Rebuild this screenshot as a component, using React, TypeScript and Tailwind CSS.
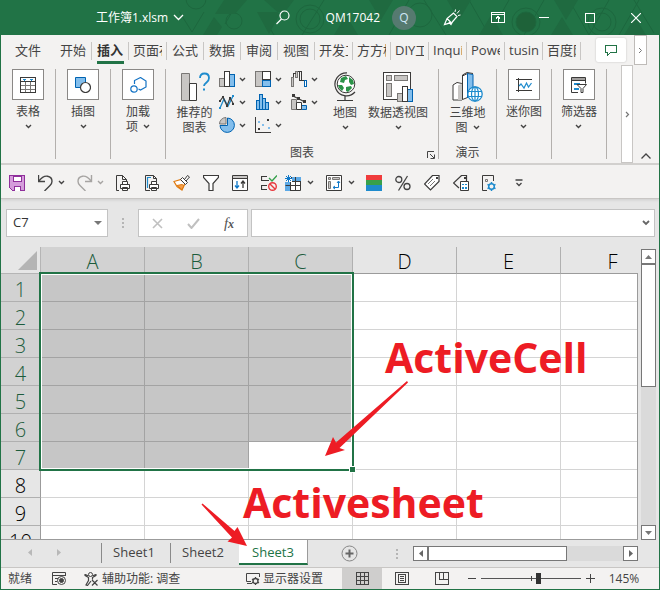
import React from "react";

type IconProps = { w?: number; h?: number; children: React.ReactNode; className?: string; crisp?: boolean };

function Icon({ w = 16, h = 16, children, className = "", crisp = false }: IconProps) {
  return (
    <svg
      width={w}
      height={h}
      viewBox={`0 0 ${w} ${h}`}
      fill="none"
      stroke="#444"
      strokeWidth="1"
      shapeRendering={crisp ? "crispEdges" : "auto"}
      aria-hidden="true"
      className={`shrink-0 ${className}`}
    >
      {children}
    </svg>
  );
}

function Chevron({ color = "#444" }: { color?: string }) {
  return (
    <Icon w={7} h={5}>
      <path d="M1 1l2.5 2.5L6 1" stroke={color} strokeWidth="1.4" />
    </Icon>
  );
}

/* ---------- title bar ---------- */

function TitlePattern() {
  return (
    <svg className="absolute inset-y-0 right-0 h-full w-[480px]" viewBox="0 0 480 35" fill="none" stroke="#1d673e" aria-hidden="true">
      <path d="M-7 0l20 32M13 32l12-20M60 0l-14 24M95 35L82 14M145 0l-22 35M210 35l20-35M245 0l22 35M290 0l20 35 20-35M345 35l20-35M390 0l20 35 20-35M440 35l20-35M455 0l20 33" />
      <circle cx="17" cy="-1" r="10" />
      <circle cx="55" cy="21" r="8" />
      <circle cx="131" cy="19" r="10" />
      <circle cx="131" cy="19" r="14" />
      <circle cx="241" cy="15" r="12" />
      <circle cx="347" cy="22" r="10" fill="#1e6239" />
      <circle cx="347" cy="22" r="14" />
      <circle cx="423" cy="22" r="9" />
      <circle cx="423" cy="22" r="14" />
      <path d="M24 35l11-18 8 10-5 8zM36 14l9-14h23l-12 14zM78 12l12 22 12-22zM85 0h30l-12 16zM155 35l12-20 12 20zM190 0h24l-12 20zM300 35l12-20 12 20zM268 0h24l-12 20zM375 0h24l-12 20zM372 35l11-18 11 18zM445 35l11-18 11 18z" fill="#1f6a40" stroke="none" />
    </svg>
  );
}

function TitleBar() {
  const control = "flex h-full w-[46px] items-center justify-center";
  return (
    <header className="relative flex h-[35px] shrink-0 items-center overflow-hidden bg-[#217346] text-[12px] leading-4 text-white">
      <TitlePattern />
      <button className="relative ml-[95px] flex items-center gap-[5px]">
        <span>工作簿1.xlsm</span>
        <Icon w={11} h={7}>
          <path d="M1 1l4.500 4.500L10 1" stroke="#fff" strokeWidth="1.300" />
        </Icon>
      </button>
      <div className="relative ml-auto flex h-full items-center">
        <button aria-label="搜索" className="mr-9">
          <Icon w={14} h={15}>
            <circle cx="8.500" cy="5.500" r="4.500" stroke="#fff" strokeWidth="1.200" />
            <path d="M5.500 9L0.500 14" stroke="#fff" strokeWidth="1.300" />
          </Icon>
        </button>
        <span className="mr-3">QM17042</span>
        <span className="mr-[13px] flex size-6 items-center justify-center rounded-full bg-[#567a70] text-[#cfe6f5]">Q</span>
        <button aria-label="笔" className={control}>
          <Icon w={18} h={17}>
            <path d="M1.500 15.500l2.500-6L10.500 4l3.500 3.500-5 6zM4 9.500l4 4M1.500 15.500l5-1.500 1.500 1.500 2-3.500" stroke="#fff" strokeWidth="1.200" />
            <path d="M12 3l0.500-2.500M14 4.500l2.500-3M15 6.500l2.500-0.500" stroke="#fff" />
          </Icon>
        </button>
        <button aria-label="功能区显示选项" className={control}>
          <Icon w={14} h={11} crisp>
            <path d="M0.500 0.500h13v10h-13zM0 2.500h14M7 10V5M5 6.500l2-2 2 2" stroke="#fff" />
          </Icon>
        </button>
        <button aria-label="最小化" className={control}>
          <span className="h-px w-[10px] bg-white" />
        </button>
        <button aria-label="最大化" className={control}>
          <span className="size-[10px] border border-white" />
        </button>
        <button aria-label="关闭" className={control}>
          <Icon w={10} h={10}>
            <path d="M0 0l10 10M10 0L0 10" stroke="#fff" strokeWidth="1.200" />
          </Icon>
        </button>
      </div>
    </header>
  );
}

/* ---------- ribbon tabs ---------- */

const tabs = ["开始", "插入", "页面布", "公式", "数据", "审阅", "视图", "开发工", "方方格", "DIY工", "Inquire", "Power", "tusin", "百度网"];

function RibbonTabs() {
  return (
    <nav className="flex h-[31px] shrink-0 items-center text-[13px] leading-[18px] text-[#444]">
      <button className="w-[54px] pb-[2px] text-center">文件</button>
      {tabs.map((t) => {
        const active = t === "插入";
        const shape = t.length === 2 ? "w-[37px] pl-[5px] pr-1" : t === "tusin" ? "w-[38px] pl-1" : "w-[38px] px-1";
        return (
          <button
            key={t}
            className={`relative h-[18px] border-r border-[#c8c6c4] text-left ${shape} ${active ? "font-bold text-[#333]" : ""}`}
          >
            <span className="-mt-[2px] block overflow-hidden whitespace-nowrap">{t}</span>
            {active && <span className="absolute top-[19px] left-[5px] h-[3px] w-[27px] bg-[#217346]" />}
          </button>
        );
      })}
      <div className="ml-auto flex h-full items-start">
        <button aria-label="批注" className="mt-[3px] mr-2 flex h-6 w-[30px] items-center justify-center rounded-[2px] bg-white shadow-[0_0_2px_#bbb]">
          <Icon w={12} h={11} crisp>
            <path d="M0.500 0.500h11v7h-6l-3 3v-3h-2z" stroke="#217346" />
          </Icon>
        </button>
        <button aria-label="更多选项卡" className="mr-3 flex h-[30px] w-[13px] items-center justify-center border border-[#bebbb8] bg-white">
          <Icon w={5} h={7}>
            <path d="M1 1l2.500 2.500L1 6" stroke="#777" />
          </Icon>
        </button>
      </div>
    </nav>
  );
}

/* ---------- ribbon body ---------- */

function Group({ width, label, children }: { width: string; label?: string; children: React.ReactNode }) {
  return (
    <section className={`relative mt-[3px] flex h-[90px] flex-col items-center border-r border-[#b3b0ad] ${width}`}>
      {children}
      {label && <h2 className="mt-auto leading-[12px]">{label}</h2>}
    </section>
  );
}

function BoxedButton({ lines, chevronInline, children }: { lines: string[]; chevronInline?: boolean; children: React.ReactNode }) {
  return (
    <button className="flex flex-col items-center leading-[14px]">
      <span className="mb-1 flex h-[31px] w-8 items-center justify-center border border-[#8a8886] bg-white">{children}</span>
      {lines.map((l, i) => (
        <span key={l} className="flex h-[15px] items-center gap-[5px]">
          {l}
          {chevronInline && i === lines.length - 1 && <Chevron />}
        </span>
      ))}
      {!chevronInline && (
        <span className="flex h-[14px] items-center">
          <Chevron />
        </span>
      )}
    </button>
  );
}

function PlainButton({ width, lines, chevron, children }: { width: string; lines: string[]; chevron?: "below" | "inline"; children: React.ReactNode }) {
  return (
    <button className={`flex flex-col items-center pt-[3px] leading-[15px] ${width}`}>
      <span className="mb-[3px] flex h-[30px] items-center">{children}</span>
      {lines.map((l, i) => (
        <span key={l} className="flex h-[15px] items-center gap-[5px] whitespace-nowrap">
          {l}
          {chevron === "inline" && i === lines.length - 1 && <Chevron />}
        </span>
      ))}
      {chevron === "below" && (
        <span className="flex h-[14px] items-center">
          <Chevron />
        </span>
      )}
    </button>
  );
}

const miniCharts: { name: string; art: React.ReactNode }[] = [
  {
    name: "柱形图",
    art: (
      <Icon crisp>
        <path d="M0.500 7.500h5v8h-5z" fill="#c8c6c4" stroke="#797775" />
        <path d="M10.500 3.500h5v12h-5z" fill="#83beec" stroke="#0063b1" />
        <path d="M5.500 0.500h5v15h-5z" fill="#fff" stroke="#3b3a39" />
      </Icon>
    ),
  },
  {
    name: "层次结构图",
    art: (
      <Icon crisp>
        <path d="M0.500 0.500h7v15h-7z" fill="#c8c6c4" stroke="#797775" />
        <path d="M7.500 0.500h8v8h-8z" fill="#fff" stroke="#3b3a39" />
        <path d="M7.500 9.500h8v6h-8z" fill="#83beec" stroke="#0063b1" />
      </Icon>
    ),
  },
  {
    name: "瀑布图",
    art: (
      <Icon crisp>
        <path d="M0.500 6.500h2v9h-2zM4.500 0.500h2v6h-2z" fill="#c8c6c4" stroke="#797775" />
        <path d="M2.500 6V2.500h2M6.500 0.500h4v9h-2v-9M10.500 9.500h3" stroke="#3b3a39" />
        <path d="M13.500 9.500h2v6h-2z" fill="#fff" stroke="#0063b1" />
      </Icon>
    ),
  },
  {
    name: "折线图",
    art: (
      <Icon>
        <path d="M1 14l4-9 4 7 5-10" stroke="#1e8bcd" strokeWidth="1.300" />
        <path d="M1 7l3-4 4 9 3-8 3 5" stroke="#3b3a39" strokeWidth="1.200" />
        <path d="M0 6h2v2H0zM3 2h2v2H3zM7 11h2v2H7zM10 3h2v2h-2zM13 9h2v2h-2z" fill="#3b3a39" stroke="none" />
        <path d="M0 13h2v2H0zM13 1h2v2h-2z" fill="#1e8bcd" stroke="none" />
      </Icon>
    ),
  },
  {
    name: "统计图",
    art: (
      <Icon crisp>
        <path d="M1.500 6.500h3v9h-3zM4.500 0.500h3v15h-3zM7.500 4.500h3v11h-3zM10.500 8.500h3v7h-3z" fill="#83beec" stroke="#0063b1" />
      </Icon>
    ),
  },
  {
    name: "组合图",
    art: (
      <Icon>
        <path d="M0.500 5.500h5v10h-5z" fill="#c8c6c4" stroke="#797775" />
        <path d="M10.500 11.500h5v4h-5z" fill="#83beec" stroke="#0063b1" />
        <path d="M5.500 8.500h5v7h-5z" fill="#fff" stroke="#3b3a39" />
        <path d="M2 2l6 3 6 3" stroke="#3b3a39" strokeWidth="1.200" />
        <path d="M1 0h3v3H1zM6 3h3v3H6zM12 6h3v3h-3z" fill="#3b3a39" stroke="none" />
      </Icon>
    ),
  },
  {
    name: "饼图",
    art: (
      <Icon>
        <path d="M8.500 1a7.200 7.200 0 1 1-7.500 7.500h7.500z" fill="#83beec" stroke="#0063b1" />
        <path d="M7 0.500v6.500H0.500A6.500 6.500 0 0 1 7 0.500z" fill="#c8c6c4" stroke="#797775" />
      </Icon>
    ),
  },
  {
    name: "散点图",
    art: (
      <Icon crisp>
        <path d="M0.500 0v15.500H16" stroke="#3b3a39" />
        <path d="M3 4h2v2H3zM7 7h2v2H7zM13 10h2v2h-2z" fill="#83beec" stroke="none" />
        <path d="M12 2h2v2h-2zM3 11h2v2H3z" fill="#3b3a39" stroke="none" />
      </Icon>
    ),
  },
];

function RibbonBody() {
  return (
    <div className="flex h-[97px] shrink-0 text-[12px] text-[#444]">
      <Group width="w-[55px]">
        <BoxedButton lines={["表格"]}>
          <Icon crisp>
            <path d="M0.500 0.500h15v15h-15z" fill="#fff" stroke="#3b3a39" />
            <path d="M1 8.500h14M1 12.500h14M5.500 5v10M10.500 5v10" stroke="#797775" />
            <path d="M0 4.500h16" stroke="#3b3a39" />
            <path d="M2 2h4L4 4zM9 2h4l-2 2z" fill="#1e8bcd" stroke="none" />
          </Icon>
        </BoxedButton>
      </Group>
      <Group width="w-[55px]">
        <BoxedButton lines={["插图"]}>
          <Icon>
            <path d="M0.500 0.500h10v10h-10z" fill="#83beec" stroke="#0063b1" />
            <circle cx="10.500" cy="10.500" r="5" fill="#fff" stroke="#3b3a39" strokeWidth="1.200" />
          </Icon>
        </BoxedButton>
      </Group>
      <Group width="w-[55px]">
        <BoxedButton lines={["加载", "项"]} chevronInline>
          <Icon w={17}>
            <path d="M4.500 7L4.500 3.500 10.500 0.500l5.500 3.500v6l-5.500 3-2-1" stroke="#1473c4" strokeWidth="1.200" />
            <circle cx="4" cy="12" r="3.200" stroke="#1473c4" strokeWidth="1.200" />
          </Icon>
        </BoxedButton>
      </Group>

      <Group width="w-[273px]" label="图表">
        <div className="flex w-full items-start pl-[9px]">
          <PlainButton width="w-[39px] mr-[5px]" lines={["推荐的", "图表"]}>
            <Icon w={30} h={30}>
              <path d="M1.500 1.500h8v27h-8z" fill="#c8c6c4" stroke="#797775" />
              <path d="M9.500 11.500h7v17h-7z" fill="#fff" stroke="#3b3a39" />
              <path d="M20 6q0-4.500 4.500-4.500T29 6q0 2.500-2.500 4.500T24 14" stroke="#1e8bcd" strokeWidth="1.800" />
              <path d="M23 16.500h2v2h-2z" fill="#1e8bcd" stroke="none" />
            </Icon>
          </PlainButton>
          <div className="mt-[2px] grid grid-cols-[36px_36px_36px] grid-rows-[16px_16px_16px] gap-y-[7px]">
            {miniCharts.map((c) => (
              <button key={c.name} aria-label={c.name} className="flex items-center gap-1">
                {c.art}
                <Chevron />
              </button>
            ))}
          </div>
          <PlainButton width="w-9" lines={["地图"]} chevron="below">
            <Icon w={24} h={30}>
              <circle cx="13" cy="12" r="8.800" fill="#fff" stroke="#3b3a39" />
              <path d="M8 6l5-2 2 3-3 1-1 3-4-1zM16 5l4 3 1 4-3 1-2-3zM5 13l4 0 2 3-2 3-3-3zM13 15l5-1 1 2-4 4-2-1z" fill="#2b9348" stroke="none" />
              <path d="M14 0.800A11.500 11.500 0 1 0 22 20M12 23.500V28M4 28.500h16" stroke="#3b3a39" strokeWidth="1.200" />
            </Icon>
          </PlainButton>
          <PlainButton width="w-[70px]" lines={["数据透视图"]} chevron="below">
            <Icon w={30} h={30} crisp>
              <path d="M0.500 0.500h27v27h-27z" fill="#fff" stroke="#3b3a39" />
              <path d="M3.500 3.500h5v5h-5zM11.500 3.500h13v5h-13zM3.500 11.500h5v13h-5z" fill="#c8c6c4" stroke="#797775" />
              <path d="M14.500 21.500h5v8h-5z" fill="#c8c6c4" stroke="#797775" />
              <path d="M24.500 17.500h5v12h-5z" fill="#83beec" stroke="#0063b1" />
              <path d="M19.500 14.500h5v15h-5z" fill="#fff" stroke="#3b3a39" />
            </Icon>
          </PlainButton>
        </div>
        <button aria-label="图表设置" className="absolute right-[3px] bottom-0">
          <Icon w={8} h={8}>
            <path d="M0.500 7V0.500H7M3 3l4 4M7.500 3.500v4h-4" stroke="#444" />
          </Icon>
        </button>
      </Group>

      <Group width="w-[58px]" label="演示">
        <PlainButton width="w-full" lines={["三维地", "图"]} chevron="inline">
          <Icon w={31} h={30}>
            <path d="M10.500 4l5-2.500v24l-5 2z" fill="#fff" stroke="#3b3a39" />
            <path d="M15.500 1.500l5.500 1V18l-5.500 8z" fill="#83beec" stroke="#0063b1" />
            <path d="M10.500 27V3l4.500-2.500 6 1" stroke="#3b3a39" />
            <path d="M1 13l4-2.500 5 1v16.500H1z" fill="#fff" stroke="#3b3a39" />
            <path d="M6 13.500l4-2v16.500H6z" fill="#c8c6c4" stroke="none" />
            <circle cx="23" cy="22" r="7.200" fill="#fff" stroke="#1e8bcd" strokeWidth="1.300" />
            <ellipse cx="23" cy="22" rx="3.500" ry="7.200" stroke="#1e8bcd" strokeWidth="1.200" />
            <path d="M16 19.500h14M16 24.500h14M23 15v14" stroke="#1e8bcd" strokeWidth="1.200" />
          </Icon>
        </PlainButton>
      </Group>
      <Group width="w-[55px]">
        <BoxedButton lines={["迷你图"]}>
          <Icon h={14}>
            <path d="M2.500 0v14M0 1.500h16M0 12.500h16" stroke="#3b3a39" shapeRendering="crispEdges" />
            <path d="M3 8l2-2 3 4 2.500-5 2 4 3-4" stroke="#1e8bcd" strokeWidth="1.200" />
          </Icon>
        </BoxedButton>
      </Group>
      <Group width="w-[55px]">
        <BoxedButton lines={["筛选器"]}>
          <Icon w={17}>
            <path d="M8 15.500H1.500v-15h14v6" stroke="#3b3a39" fill="#fff" />
            <path d="M2 1h13v3H2z" fill="#a19f9d" stroke="none" />
            <path d="M1.500 3.500h14" stroke="#3b3a39" />
            <path d="M4 6h6v2H4zM4 11h5v2H4z" fill="#1e8bcd" stroke="none" />
            <path d="M7 7.500h9.500L13 11.500v4h-2v-4z" fill="#fff" stroke="#3b3a39" />
          </Icon>
        </BoxedButton>
      </Group>
      <div className="ml-auto flex">
        <button aria-label="向右滚动" className="-mt-px flex h-[98px] w-3 items-center justify-center border border-[#c8c6c4] bg-white">
          <Icon w={5} h={7}>
            <path d="M1 1l2.500 2.500L1 6" stroke="#777" strokeWidth="1.200" />
          </Icon>
        </button>
        <button aria-label="折叠功能区" className="flex w-[26px] items-end justify-center pb-1">
          <Icon w={10} h={6}>
            <path d="M0.500 5.500L5 1l4.500 4.500" strokeWidth="1.300" />
          </Icon>
        </button>
      </div>
    </div>
  );
}

/* ---------- quick access toolbar ---------- */

function Tool({ name, children }: { name: string; children: React.ReactNode }) {
  return (
    <button aria-label={name} className="flex h-full w-[29px] items-center justify-center">
      {children}
    </button>
  );
}

function QuickAccess() {
  return (
    <div className="z-10 flex h-[34px] shrink-0 items-center border-b border-[#c8c6c4] bg-[#f3f2f1] pt-[2px] pl-px shadow-[0_1px_3px_#ccc]">
      <Tool name="保存">
        <Icon crisp>
          <path d="M0.500 0.500h15v15H3.500l-3-3z" fill="#d59ddb" stroke="#8f2f9b" />
          <path d="M4 1h8v5H4zM5 11h6v5H5z" fill="#fff" stroke="#8f2f9b" />
        </Icon>
      </Tool>
      <button aria-label="撤消" className="flex h-full w-[39px] items-center gap-1 pl-[7px]">
        <Icon>
          <path d="M0.500 0v6.500H7M0.800 6.200Q5 0.500 9.500 1.200t4.500 5Q14 8.500 12 10.500L6.500 16" strokeWidth="1.400" />
        </Icon>
        <Chevron />
      </button>
      <button aria-label="恢复" className="flex h-full w-[39px] items-center gap-1 pl-[7px]">
        <Icon>
          <path d="M14.500 0v6.500H8M14.200 6.200Q10 0.500 5.500 1.200t-4.500 5Q1 8.500 3 10.500L8.500 16" stroke="#a6a4a2" strokeWidth="1.400" />
        </Icon>
        <Chevron color="#a6a4a2" />
      </button>
      <Tool name="打印预览">
        <Icon w={15}>
          <path d="M3 15.500H0.500V0.500h6l4 4V7M6.500 0.500v4h4" stroke="#3b3a39" />
          <path d="M6.500 9V6.500h5V9M4.500 9.500h9v4h-9zM6.500 12.500h5v3h-5z" stroke="#3b3a39" fill="#fff" />
        </Icon>
      </Tool>
      <Tool name="快速打印">
        <Icon w={15}>
          <path d="M5 15.500H0.500V0.500h8l3 3V7M8.500 0.500v3h3" stroke="#3b3a39" />
          <path d="M2.500 13V2.500H6" stroke="#1e8bcd" strokeWidth="1.200" />
          <path d="M6.500 9V6.500h5V9M4.500 9.500h9v4h-9zM6.500 12.500h5v3h-5z" stroke="#3b3a39" fill="#fff" />
        </Icon>
      </Tool>
      <Tool name="格式刷">
        <Icon w={17}>
          <path d="M1 6.500l7-2 4 4-3 6.500-5-3.500z" fill="#fff" stroke="#e07a10" strokeWidth="1.200" />
          <path d="M4 10.500l5-1 2 1-2 4z" fill="#f5a04c" stroke="#e07a10" />
          <path d="M7.500 4.500l2-2 5 5-2 2zM11.500 4.500l3-4 2 1.500-3.500 4" fill="#fff" stroke="#3b3a39" />
        </Icon>
      </Tool>
      <Tool name="筛选">
        <Icon>
          <path d="M0.500 0.500h15v2L10 8.500v7H6v-7L0.500 2.500z" stroke="#3b3a39" strokeWidth="1.200" fill="#fff" />
        </Icon>
      </Tool>
      <Tool name="排序">
        <Icon>
          <path d="M0.500 0.500h15v15h-15z" stroke="#3b3a39" fill="#fff" />
          <path d="M1 1h14v2H1z" fill="#c8c6c4" stroke="none" />
          <path d="M0.500 3.500h15" stroke="#3b3a39" />
          <path d="M5 6v7M3 10.500l2 2.500 2-2.500" stroke="#0f78c8" strokeWidth="1.300" />
          <path d="M11 13V6M9 8.500L11 6l2 2.500" stroke="#3b3a39" strokeWidth="1.300" />
        </Icon>
      </Tool>
      <Tool name="数据验证">
        <Icon>
          <path d="M6 1.500H0.500v4H8M6 10.500H0.500v4H6" stroke="#3b3a39" strokeWidth="1.200" />
          <path d="M8 3l3 3 5-5.500" stroke="#35a04b" strokeWidth="1.400" />
          <circle cx="11.500" cy="11.500" r="3.800" stroke="#e8383d" strokeWidth="1.400" />
          <path d="M9 9l5 5" stroke="#e8383d" strokeWidth="1.400" />
        </Icon>
      </Tool>
      <button aria-label="冻结窗格" className="mr-[6px] flex h-full w-[35px] items-center gap-[6px] pl-[2px]">
        <Icon>
          <path d="M6 2.500h9.500v13H0.500V8" stroke="#3b3a39" fill="#fff" />
          <path d="M7 2h9v4H7zM0 7h5v9H0z" fill="#5ca9e6" stroke="none" />
          <path d="M0.500 10.500h15M5.500 7v9M10.500 2v14M7 6.500h9" stroke="#3b3a39" />
          <path d="M3.500 0v7M0 3.500h7M1 1l5 5M6 1L1 6" stroke="#0f78c8" />
        </Icon>
        <Chevron />
      </button>
      <button aria-label="数据透视表" className="flex h-full w-[35px] items-center gap-[6px] pl-[2px]">
        <Icon>
          <path d="M0.500 0.500h15v15h-15z" stroke="#3b3a39" fill="#fff" />
          <path d="M2.500 2.500h2v2h-2zM6.500 2.500h7v2h-7zM2.500 6.500h2v7h-2z" fill="#c8c6c4" stroke="#797775" />
          <path d="M12.500 6.500v6h-5M11 8l1.500-2L14 8M9 11l-2 1.500L9 14" stroke="#0f78c8" />
        </Icon>
        <Chevron />
      </button>
      <Tool name="色阶">
        <Icon crisp>
          <path d="M0 0h16v5H0z" fill="#f03c3c" stroke="none" />
          <path d="M0 5h16v5H0z" fill="#38a04b" stroke="none" />
          <path d="M0 10h16v6H0z" fill="#1e8bcd" stroke="none" />
        </Icon>
      </Tool>
      <Tool name="百分比样式">
        <Icon>
          <circle cx="3.800" cy="4.500" r="3" strokeWidth="1.300" />
          <circle cx="12" cy="11.500" r="3" strokeWidth="1.300" />
          <path d="M12.500 1L3.500 15.500" strokeWidth="1.300" />
        </Icon>
      </Tool>
      <Tool name="标签">
        <Icon>
          <path d="M8.500 0.500h6.500v6L6.500 15 0.500 9z" stroke="#3b3a39" strokeWidth="1.200" fill="#fff" />
          <path d="M4 9l5-5M6 11l5-5" stroke="#797775" />
          <path d="M12 2h2v2h-2z" fill="#3b3a39" stroke="none" />
        </Icon>
      </Tool>
      <Tool name="标签属性">
        <Icon>
          <path d="M6 13L0.500 8l8-7.500h5V6" stroke="#3b3a39" strokeWidth="1.200" />
          <path d="M11 2h2v2h-2z" fill="#3b3a39" stroke="none" />
          <path d="M7.500 6.500h8v9h-8z" stroke="#3b3a39" fill="#fff" />
          <path d="M9 9h2v1H9zM12 9h2v1h-2zM9 12h2v2H9zM12 12h2v2h-2z" fill="#1e8bcd" stroke="none" />
        </Icon>
      </Tool>
      <Tool name="设置">
        <Icon w={15}>
          <path d="M5 15.500H0.500V0.500h11V6" stroke="#3b3a39" />
          <path d="M3.500 4.500h2v2h-2z" stroke="#797775" />
          <circle cx="9.500" cy="11.500" r="2.800" stroke="#1e8bcd" strokeWidth="1.500" />
          <path d="M9.500 7v2M9.500 14v2M5.500 9.300l1.700 1M11.800 12.700l1.700 1M5.500 13.700l1.700-1M11.800 10.300l1.700-1" stroke="#1e8bcd" strokeWidth="1.500" />
        </Icon>
      </Tool>
      <Tool name="自定义快速访问工具栏">
        <Icon w={8} h={8}>
          <path d="M0.500 1h7M1.500 4L4 6.500 6.500 4" strokeWidth="1.300" />
        </Icon>
      </Tool>
    </div>
  );
}

/* ---------- formula bar ---------- */

function FormulaBar() {
  return (
    <div className="flex h-12 shrink-0 items-center pr-1 pl-[5px] text-[13px] text-[#333]">
      <div className="flex h-7 w-[102px] items-center border border-[#c3c3c3] bg-white pr-[5px]">
        <input aria-label="名称框" defaultValue="C7" className="w-full min-w-0 flex-1 bg-transparent pl-[6px] outline-none" />
        <Icon w={8} h={4}>
          <path d="M0 0h8L4 4z" fill="#777" stroke="none" />
        </Icon>
      </div>
      <Icon w={2} h={10} crisp className="mx-[14px]">
        <path d="M0 0h2v2H0zM0 4h2v2H0zM0 8h2v2H0z" fill="#b5b5b5" stroke="none" />
      </Icon>
      <div className="flex h-7 w-[110px] shrink-0 items-center border border-[#c3c3c3] bg-white">
        <button aria-label="取消" className="flex flex-1 justify-center">
          <Icon w={11} h={11}>
            <path d="M1 1l9 9M10 1L1 10" stroke="#c0c0c0" strokeWidth="1.600" />
          </Icon>
        </button>
        <button aria-label="输入" className="flex flex-1 justify-center">
          <Icon w={13} h={11}>
            <path d="M1 6l3.500 4L12 1" stroke="#c0c0c0" strokeWidth="2" />
          </Icon>
        </button>
        <button aria-label="插入函数" className="flex-1 font-['Liberation_Serif',serif] text-[15px] leading-5 text-[#555] italic">
          f<span className="text-[12px] font-bold">x</span>
        </button>
      </div>
      <div className="ml-[3px] flex h-7 flex-1 items-center border border-[#c3c3c3] bg-white pr-1">
        <input aria-label="编辑栏" className="min-w-0 flex-1 bg-transparent px-1 outline-none" />
        <Icon w={8} h={6}>
          <path d="M1 1l3 3 3-3" stroke="#666" strokeWidth="1.800" />
        </Icon>
      </div>
    </div>
  );
}

/* ---------- worksheet ---------- */

const columns = ["A", "B", "C", "D", "E", "F"];
const rows = [1, 2, 3, 4, 5, 6, 7, 8, 9, 10];

function Sheet() {
  return (
    <main className="relative flex min-h-0 flex-1">
      <div className="relative min-w-0 flex-1 overflow-hidden border-b border-[#9b9b9b]">
        <table className="w-[664px] table-fixed border-separate border-spacing-0 text-[20px] leading-[22px]">
          <colgroup>
            <col className="w-10" />
            {columns.map((c) => (
              <col key={c} className="w-[104px]" />
            ))}
          </colgroup>
          <thead>
            <tr>
              <th aria-label="全选" className="h-[27px] border-r border-b border-r-[#b5b5b5] border-b-[#b5b5b5] bg-[#e6e6e6] p-0">
                <Icon w={19} h={19} className="ml-[17px]">
                  <path d="M19 0v19H0z" fill="#b4b4b4" stroke="none" />
                </Icon>
              </th>
              {columns.map((c, i) => (
                <th
                  key={c}
                  className={`h-[27px] border-r border-b border-r-[#b0b0b0] border-b-[#9b9b9b] p-0 pt-1 font-light ${i < 3 ? "bg-[#d2d2d2] text-[#1c5c3c]" : "bg-[#e6e6e6] text-black"}`}
                >
                  {c}
                </th>
              ))}
            </tr>
          </thead>
          <tbody>
            {rows.map((r) => (
              <tr key={r}>
                <th
                  className={`h-7 border-r border-b border-r-[#9b9b9b] border-b-[#b0b0b0] p-0 pt-[5px] font-light ${r < 8 ? "bg-[#d2d2d2] text-[#1c5c3c]" : "bg-[#e6e6e6] text-black"}`}
                >
                  {r}
                </th>
                {columns.map((c, i) => {
                  const selected = r < 8 && i < 3 && !(r === 7 && i === 2);
                  return (
                    <td
                      key={c}
                      className={`border-r border-b p-0 ${selected ? "border-[#a3a3a3] bg-[#c6c6c6]" : "border-[#d4d4d4] bg-white"}`}
                    />
                  );
                })}
              </tr>
            ))}
          </tbody>
        </table>
        <div className="absolute top-[25px] left-[38px] h-[199px] w-[315px] border-2 border-[#217346] shadow-[inset_0_0_0_1px_#fff]">
          <span className="absolute -right-[4px] -bottom-[4px] size-[7px] border border-white bg-[#217346]" />
        </div>
        <div className="absolute top-[26px] right-0 bottom-0 w-px bg-[#9b9b9b]" />
      </div>

      <div className="mt-[2px] mr-[3px] ml-[3px] flex w-[15px] flex-col bg-[#dadada]">
        <button aria-label="向上滚动" className="flex size-[15px] items-center justify-center border border-[#777] bg-white">
          <Icon w={7} h={4}>
            <path d="M0 4h7L3.500 0z" fill="#777" stroke="none" />
          </Icon>
        </button>
        <div className="h-[123px] border border-[#777] bg-white" />
        <button aria-label="向下滚动" className="mt-auto flex size-[15px] items-center justify-center border border-[#777] bg-white">
          <Icon w={7} h={4}>
            <path d="M0 0h7L3.500 4z" fill="#777" stroke="none" />
          </Icon>
        </button>
      </div>

      <div className="pointer-events-none absolute top-0 left-0 z-20 text-[41px] leading-[48px] font-bold text-[#ed1c24]">
        <svg className="absolute top-0 left-0 h-[302px] w-[420px]" viewBox="0 0 420 302" fill="#ed1c24" aria-hidden="true">
          <path d="M324 209L332 190l3 5.500L406 134l1 1.500L338.500 201l5.500 2z" />
          <path d="M246 299l-19.500-4.500 4.500-4L200.500 257.500l1-1L233.500 284l3-4z" />
        </svg>
        <span className="absolute top-[86px] left-[384px]">ActiveCell</span>
        <span className="absolute top-[231px] left-[242px]">Activesheet</span>
      </div>
    </main>
  );
}

/* ---------- sheet tabs and status bar ---------- */

function SheetTabs() {
  return (
    <div className="flex h-[27px] shrink-0 text-[13px] leading-[18px] text-[#444]">
      <div className="flex w-[100px] items-center gap-[25px] pb-[2px] pl-[27px]">
        <button aria-label="上一个工作表">
          <Icon w={4} h={7}>
            <path d="M4 0v7L0 3.500z" fill="#b8b8b8" stroke="none" />
          </Icon>
        </button>
        <button aria-label="下一个工作表">
          <Icon w={4} h={7}>
            <path d="M0 0v7l4-3.500z" fill="#b8b8b8" stroke="none" />
          </Icon>
        </button>
      </div>
      {["Sheet1", "Sheet2"].map((s) => (
        <button key={s} className="mt-[3px] h-5 w-[69px] border-l border-[#8a8a8a] pr-1 pb-[2px] text-center">
          {s}
        </button>
      ))}
      <button className="-mt-px h-[26px] w-[69px] border-r border-b-2 border-r-[#9b9b9b] border-b-[#217346] bg-white pt-[2px] text-center text-[#217346]">Sheet3</button>
      <button aria-label="新工作表" className="ml-[33px] flex items-center">
        <Icon w={17} h={17}>
          <circle cx="8.500" cy="8.500" r="7.500" stroke="#888" />
          <path d="M8.500 4.500v8M4.500 8.500h8" stroke="#666" strokeWidth="2" />
        </Icon>
      </button>
      <div className="ml-auto flex items-center pr-[21px]">
        <Icon w={2} h={10} crisp className="mr-[15px]">
          <path d="M0 0h2v2H0zM0 4h2v2H0zM0 8h2v2H0z" fill="#b5b5b5" stroke="none" />
        </Icon>
        <div className="flex h-[15px] w-[225px] bg-[#dadada]">
          <button aria-label="向左滚动" className="flex size-[15px] items-center justify-center border border-[#777] bg-white">
            <Icon w={4} h={7}>
              <path d="M4 0v7L0 3.500z" fill="#666" stroke="none" />
            </Icon>
          </button>
          <div className="w-[139px] border border-[#777] bg-white" />
          <button aria-label="向右滚动工作表" className="ml-auto flex size-[15px] items-center justify-center border border-[#777] bg-white">
            <Icon w={4} h={7}>
              <path d="M0 0v7l4-3.500z" fill="#666" stroke="none" />
            </Icon>
          </button>
        </div>
      </div>
    </div>
  );
}

function StatusBar() {
  const view = "flex h-full w-10 items-center justify-center";
  return (
    <footer className="flex h-[22px] shrink-0 items-center border-t border-[#c8c6c4] bg-[#f3f2f1] text-[12px] leading-4 text-[#444]">
      <span className="ml-[7px]">就绪</span>
      <button aria-label="录制宏" className="ml-5">
        <Icon w={15} h={13}>
          <path d="M5 12.500H0.500v-12h13V4M0 3.500h14M3 6.500h3M3 9.500h2" />
          <circle cx="9.500" cy="8.500" r="4" />
          <circle cx="9.500" cy="8.500" r="2" fill="#444" />
        </Icon>
      </button>
      <button className="ml-[17px] flex items-center gap-1">
        <Icon w={14} h={14}>
          <circle cx="6.500" cy="2.500" r="2" />
          <path d="M1 3.500l3.500 2v3L2 13l1.500 0.500L7 9M12 3.500L8.500 5.500v2M1 3.500Q0.500 2 2.500 3l2 1M12 3.500Q12.500 2 10.500 3l-2 1M8 8l5.500 5.500M13.500 8L8 13.500" strokeWidth="1.200" />
        </Icon>
        <span>辅助功能: 调查</span>
      </button>
      <div className="ml-auto flex h-full items-center pr-[10px]">
        <button className="mr-[19px] flex items-center gap-[3px]">
          <Icon w={14} h={13}>
            <path d="M5 9.500H0.500v-8h13V5M1 11.500h5" />
            <circle cx="9.500" cy="9" r="2.500" strokeWidth="1.300" />
            <path d="M9.500 5v2M9.500 11v2M6 7l1.500 1M11.500 10l1.500 1M6 11l1.500-1M11.500 8L13 7" strokeWidth="1.200" />
          </Icon>
          <span>显示器设置</span>
        </button>
        <button aria-label="普通" className={`${view} bg-[#cfcecd]`}>
          <Icon w={13} h={13} crisp>
            <path d="M0.500 0.500h12v12h-12zM4.500 0v13M8.500 0v13M0 4.500h13M0 8.500h13" />
          </Icon>
        </button>
        <button aria-label="页面布局视图" className={view}>
          <Icon w={14} h={13} crisp>
            <path d="M0.500 0.500h13v12h-13zM3.500 2.500h7v8h-7zM5 4.500h4M5 6.500h4M5 8.500h4" />
          </Icon>
        </button>
        <button aria-label="分页预览" className={view}>
          <Icon w={14} h={13} crisp>
            <path d="M0.500 0.500h13v12h-13zM4.500 0v7.500h4V0M8 7.500h6" />
          </Icon>
        </button>
        <button aria-label="缩小" className="flex h-full w-[19px] items-center justify-center">
          <span className="h-px w-2 bg-[#444]" />
        </button>
        <div className="relative flex h-full items-center">
          <input
            type="range"
            aria-label="显示比例"
            defaultValue={58}
            className="h-[11px] w-[100px] appearance-none bg-transparent [&::-webkit-slider-runnable-track]:h-px [&::-webkit-slider-runnable-track]:bg-[#555] [&::-webkit-slider-thumb]:-mt-[5px] [&::-webkit-slider-thumb]:h-[11px] [&::-webkit-slider-thumb]:w-[5px] [&::-webkit-slider-thumb]:appearance-none [&::-webkit-slider-thumb]:bg-[#333]"
          />
          <span className="absolute left-1/2 h-[5px] w-px bg-[#444]" />
        </div>
        <button aria-label="放大" className="flex h-full w-[18px] items-center justify-center">
          <Icon w={9} h={9} crisp>
            <path d="M4.500 0v9M0 4.500h9" />
          </Icon>
        </button>
        <button className="w-[50px] text-center">145%</button>
      </div>
    </footer>
  );
}

export default function App() {
  return (
    <div className="flex h-screen w-full flex-col overflow-hidden border-x border-b border-[#217346] bg-[#e6e6e6] font-['Open_Sans','Noto_Sans_CJK_SC',sans-serif]">
      <TitleBar />
      <div className="shrink-0 border-b-2 border-[#d2d0ce] bg-[#f3f2f1]">
        <RibbonTabs />
        <RibbonBody />
      </div>
      <QuickAccess />
      <FormulaBar />
      <Sheet />
      <SheetTabs />
      <StatusBar />
    </div>
  );
}
